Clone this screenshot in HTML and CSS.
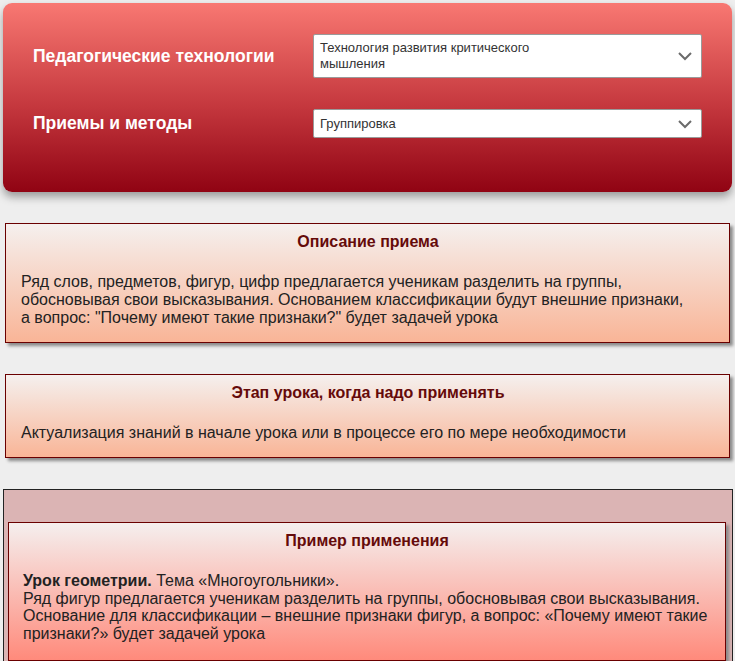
FILE: index.html
```html
<!DOCTYPE html>
<html>
  <head>
    <meta charset="utf-8">
    <title>Приемы и методы</title>
    <link rel="stylesheet" href="styles.css">
  </head>
  <body>
    <header class="panel">
      <div class="field">
        <label class="label">Педагогические технологии</label>
        <div class="select">
          <span class="select-text">Технология развития критического<br>мышления</span>
          <svg class="chevron" width="16" height="10" viewBox="0 0 16 10"><path d="M2 2 L8 8 L14 2" fill="none" stroke="#6b6b6b" stroke-width="2"/></svg>
        </div>
      </div>
      <div class="field">
        <label class="label">Приемы и методы</label>
        <div class="select">
          <span class="select-text">Группировка</span>
          <svg class="chevron" width="16" height="10" viewBox="0 0 16 10"><path d="M2 2 L8 8 L14 2" fill="none" stroke="#6b6b6b" stroke-width="2"/></svg>
        </div>
      </div>
    </header>

    <article class="card">
      <h2 class="card-title">Описание приема</h2>
      <p class="card-text">Ряд слов, предметов, фигур, цифр предлагается ученикам разделить на группы,<br>обосновывая свои высказывания. Основанием классификации будут внешние признаки,<br>а вопрос: "Почему имеют такие признаки?" будет задачей урока</p>
    </article>

    <article class="card">
      <h2 class="card-title">Этап урока, когда надо применять</h2>
      <p class="card-text">Актуализация знаний в начале урока или в процессе его по мере необходимости</p>
    </article>

    <section class="example">
      <article class="card card-red">
        <h2 class="card-title">Пример применения</h2>
        <p class="card-text"><b>Урок геометрии.</b> Тема «Многоугольники».<br>Ряд фигур предлагается ученикам разделить на группы, обосновывая свои высказывания.<br>Основание для классификации – внешние признаки фигур, а вопрос: «Почему имеют такие<br>признаки?» будет задачей урока</p>
      </article>
    </section>
  </body>
</html>
```

FILE: styles.css
```css
body {
  margin: 0;
  padding: 3px 2px 0 3px;
  background-color: #eeeeee;
  font-family: "Liberation Sans", Arial, sans-serif;
  color: #222;
}

.panel {
  display: flex;
  flex-direction: column;
  gap: 31px;
  width: 729px;
  box-sizing: border-box;
  padding: 31px 30px 54px 30px;
  border-radius: 9px;
  background: linear-gradient(#f87872, #c4373d 55%, #900313);
  box-shadow: 0 5px 8px rgba(0, 0, 0, 0.35);
}

.field {
  display: flex;
  align-items: center;
}

.label {
  width: 280px;
  color: #fff;
  font-size: 17.5px;
  font-weight: bold;
}

.select {
  display: flex;
  align-items: center;
  justify-content: space-between;
  width: 389px;
  min-height: 29px;
  box-sizing: border-box;
  padding: 5px 8px 5px 6px;
  border: 1px solid #9a9a9a;
  border-radius: 2px;
  background-color: #fff;
  color: #333;
  font-size: 13px;
  line-height: 16px;
}

.chevron {
  flex: none;
}

.card {
  margin: 31px 0 0 2px;
  width: 725px;
  box-sizing: border-box;
  padding: 9px 14px 15px 15px;
  border: 1px solid #6a0000;
  background: linear-gradient(#f5f0ee, #f9b597);
  box-shadow: 3px 3px 3px #8a8a8a;
}

.card-title {
  margin: 0 0 22px 0;
  color: #650a0a;
  font-size: 16px;
  line-height: 18px;
  text-align: center;
}

.card-text {
  margin: 0;
  font-size: 16px;
  line-height: 18px;
}

.example {
  margin-top: 31px;
  width: 730px;
  height: 200px;
  box-sizing: border-box;
  padding: 32px 6px 0 4px;
  border: 1px solid #222;
  background-color: #dbb4b4;
}

.card-red {
  margin: 0;
  width: 718px;
  padding: 9px 14px 17px 14px;
  background: linear-gradient(#f5efee, #ff8a7b);
}

.card-red .card-text {
  line-height: 17.7px;
}
```
